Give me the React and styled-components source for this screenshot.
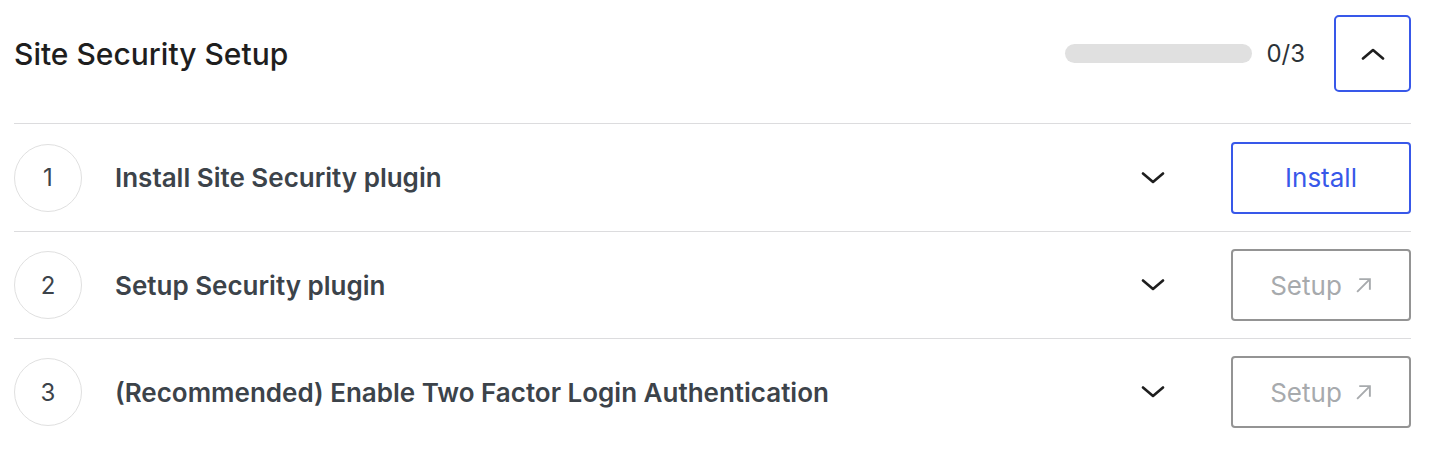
import React from 'react';
import styled, { createGlobalStyle } from 'styled-components';

const GlobalStyle = createGlobalStyle`
  body {
    margin: 0;
    background: #fff;
    font-family: Inter, "Liberation Sans", sans-serif;
  }
`;

const Panel = styled.section`
  padding: 0 29px 0 14px;
`;

const Header = styled.header`
  display: flex;
  align-items: center;
  justify-content: space-between;
  padding: 15px 0 31px;
  border-bottom: 1px solid #dcdcde;
`;

const Title = styled.h2`
  margin: 0;
  font-size: 30px;
  font-weight: 500;
  color: #1e1e1e;
`;

const HeaderRight = styled.div`
  display: flex;
  align-items: center;
`;

const Progress = styled.div`
  width: 187px;
  height: 19px;
  border-radius: 10px;
  background: #e0e0e0;
  overflow: hidden;
`;

const ProgressFill = styled.div`
  height: 100%;
  background: #3858e9;
`;

const Count = styled.span`
  margin: 0 29px 0 14px;
  font-size: 24px;
  color: #2c3338;
`;

const Toggle = styled.button`
  display: flex;
  align-items: center;
  justify-content: center;
  width: 77px;
  height: 77px;
  padding: 0;
  background: #fff;
  border: 2px solid #3858e9;
  border-radius: 5px;
  color: #1e1e1e;
`;

const Steps = styled.ol`
  list-style: none;
  margin: 0;
  padding: 0;
`;

const Step = styled.li`
  display: flex;
  align-items: center;
  height: 106px;
  border-bottom: ${p => (p.$last ? 'none' : '1px solid #dcdcde')};
  &:first-child {
    height: 107px;
  }
`;

const Num = styled.span`
  display: flex;
  align-items: center;
  justify-content: center;
  flex: none;
  width: 66px;
  height: 66px;
  border: 1.5px solid #e0e0e0;
  border-radius: 50%;
  font-size: 24px;
  color: #3c434a;
`;

const StepTitle = styled.span`
  flex: 1;
  margin-left: 33px;
  font-size: 26px;
  font-weight: 600;
  color: #3c434a;
`;

const Expand = styled.button`
  display: flex;
  align-items: center;
  justify-content: center;
  width: 48px;
  height: 48px;
  margin-right: 54px;
  padding: 0;
  background: none;
  border: 0;
  color: #1e1e1e;
`;

const Action = styled.button`
  display: flex;
  align-items: center;
  justify-content: center;
  gap: 13px;
  width: 180px;
  height: 72px;
  padding: 0;
  background: #fff;
  border: 2px solid ${p => (p.$primary ? '#3858e9' : '#949494')};
  border-radius: 4px;
  font-family: inherit;
  font-size: 26px;
  color: ${p => (p.$primary ? '#3858e9' : '#a7aaad')};
`;

const Chevron = ({ up }) => (
  <svg width="24" height="12" viewBox="0 0 24 12" fill="none">
    <path
      d={up ? 'M2 10.5 L12 2 L22 10.5' : 'M2 1.5 L12 10 L22 1.5'}
      stroke="currentColor"
      strokeWidth="2.6"
      strokeLinecap="round"
      strokeLinejoin="round"
    />
  </svg>
);

const External = () => (
  <svg width="17" height="17" viewBox="0 0 16 16" fill="none">
    <path d="M2 14 L14 2 M4 2 H14 V12" stroke="currentColor" strokeWidth="1.8" />
  </svg>
);

const steps = [
  { title: 'Install Site Security plugin', action: 'Install', primary: true },
  { title: 'Setup Security plugin', action: 'Setup' },
  { title: '(Recommended) Enable Two Factor Login Authentication', action: 'Setup' },
];

const App = () => {
  const done = 0;
  return (
    <>
      <GlobalStyle />
      <Panel>
        <Header>
          <Title>Site Security Setup</Title>
          <HeaderRight>
            <Progress>
              <ProgressFill style={{ width: `${(done / steps.length) * 100}%` }} />
            </Progress>
            <Count>{done}/{steps.length}</Count>
            <Toggle aria-label="Collapse">
              <Chevron up />
            </Toggle>
          </HeaderRight>
        </Header>
        <Steps>
          {steps.map((s, i) => (
            <Step key={s.title} $last={i === steps.length - 1}>
              <Num>{i + 1}</Num>
              <StepTitle>{s.title}</StepTitle>
              <Expand aria-label="Expand">
                <Chevron />
              </Expand>
              <Action $primary={s.primary}>
                {s.action}
                {!s.primary && <External />}
              </Action>
            </Step>
          ))}
        </Steps>
      </Panel>
    </>
  );
};

export default App;
